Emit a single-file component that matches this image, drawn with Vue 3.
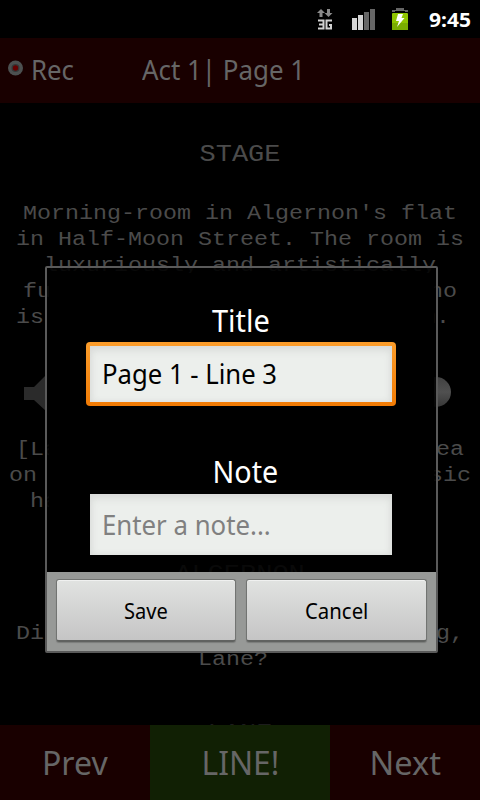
<script setup>
const vFit = {
  mounted(el, { value }) {
    el.style.transform = `scaleX(${value / el.offsetWidth})`
  },
}
const stage = [
  "Morning-room in Algernon's flat",
  'in Half-Moon Street. The room is',
  'luxuriously and artistically',
  'furnished. The sound of a piano',
  'is heard in the adjoining room.\u00a0',
]
const direction = [
  '[Lane is arranging afternoon tea',
  'on the table, and after the music',
  'has ceased, Algernon enters.]\u00a0',
]
const speech = ['Did you hear what I was playing,', 'Lane?\u00a0']
</script>

<template>
  <div class="screen">
    <header class="status">
      <svg class="net" width="18" height="24" viewBox="0 0 18 24">
        <path d="M5 1 9 5H6.500V9H3.500V5H1zM12.500 9 8.500 5H11V1H14V5H16.500z" fill="#8b8b8b" />
        <path d="M2 12.500H7.500V20.500H2M3 16.500H7.500M16 12.500H10.500V20.500H15V17H13" fill="none" stroke="#d2d2d2" stroke-width="2" />
      </svg>
      <svg class="signal" width="24" height="22" viewBox="0 0 24 22">
        <path d="M0 9h5v12H0zM6 6h5v15H6z" fill="#d4d4d4" />
        <path d="M12 3h5v18h-5zM18 0h5v21h-5z" fill="#666" />
      </svg>
      <svg class="battery" width="18" height="24" viewBox="0 0 18 24">
        <path d="M1 5V3H5V1H13V3H17V5H14V4H4V5z" fill="#666" />
        <rect x="1" y="6" width="16" height="17" rx="1" fill="#8fc400" />
        <path d="M1 16h16v7H1z" fill="#7aad00" />
        <path d="M7 7h5L10.500 11H13.500L6 20 8 14H5z" fill="#fff" />
      </svg>
      <b class="clock"><span v-fit="42">9:45</span></b>
    </header>

    <nav class="top">
      <svg width="16" height="16" viewBox="0 0 16 16">
        <circle cx="8.500" cy="8" r="7.500" fill="#4c5050" />
        <circle cx="8.500" cy="8" r="4" fill="#343838" />
        <circle cx="8.500" cy="8" r="2.700" fill="#650000" />
      </svg>
      <span v-fit="43" class="rec">Rec</span>
      <span v-fit="163" class="page">Act 1| Page 1</span>
    </nav>

    <main class="script">
      <h2>STAGE</h2>
      <div class="lines">
        <p v-for="l in stage" :key="l">{{ l }}</p>
      </div>
      <div class="player">
        <svg width="34" height="36" viewBox="0 0 34 36">
          <path d="M0 12H10L22 0V36L10 25H0z" fill="#2b2b2b" />
        </svg>
        <i class="knob"></i>
      </div>
      <div class="lines">
        <p v-for="l in direction" :key="l">{{ l }}</p>
      </div>
      <h2 class="speaker">ALGERNON</h2>
      <div class="lines">
        <p v-for="l in speech" :key="l">{{ l }}</p>
      </div>
      <h2 class="next-speaker">LANE</h2>
    </main>

    <footer class="bottom">
      <div><span v-fit="66">Prev</span></div>
      <div class="cue"><span v-fit="78">LINE!</span></div>
      <div><span v-fit="71">Next</span></div>
    </footer>

    <section class="dialog">
      <div class="form">
        <label class="title"><span v-fit="58">Title</span></label>
        <div class="field focused"><span v-fit="175">Page 1 - Line 3</span></div>
        <label class="note"><span v-fit="66">Note</span></label>
        <div class="field hint"><span v-fit="169">Enter a note...</span></div>
      </div>
      <div class="actions">
        <button><span v-fit="44">Save</span></button>
        <button><span v-fit="63">Cancel</span></button>
      </div>
    </section>
  </div>
</template>

<style>
body {
  background: #000;
}
</style>

<style scoped>
* {
  box-sizing: border-box;
}
.screen {
  position: relative;
  width: 480px;
  height: 800px;
  overflow: hidden;
  display: flex;
  flex-direction: column;
  background: #000;
  font-family: "Noto Sans", "Open Sans", sans-serif;
}
span {
  display: inline-block;
  white-space: nowrap;
}
.status {
  flex: 0 0 38px;
  display: flex;
  align-items: flex-start;
  padding: 8px 0 0 316px;
}
.signal {
  margin: 1px 0 0 18px;
}
.battery {
  margin: -1px 0 0 15px;
}
.clock {
  flex: 1;
  display: flex;
  margin: 2px 0 0 20px;
  color: #fff;
  font-size: 20px;
  line-height: 20px;
}
.clock span,
.top span,
.field span {
  transform-origin: left;
}
.top {
  flex: 0 0 65px;
  display: grid;
  grid-template-columns: 23px 111px 1fr;
  align-items: center;
  justify-items: start;
  padding-left: 7px;
  background: #190000;
  color: #666;
  font-size: 27px;
  line-height: 64px;
}
.top span {
  margin: -1px 0 0 1px;
}
.top svg {
  margin-top: -5px;
}
.script {
  flex: 1;
  min-height: 0;
  overflow: hidden;
  padding-top: 37px;
  font-family: "Liberation Mono", monospace;
  color: #4b4b4b;
  text-align: center;
}
h2 {
  margin: 0;
  font-size: 24.5px;
  font-weight: 400;
  line-height: 30px;
  transform: scaleX(1.102);
}
p {
  margin: 0;
  font-size: 20.5px;
  line-height: 26px;
  white-space: nowrap;
  transform: scaleX(1.138);
}
.script > h2 + .lines {
  margin-top: 31px;
}
.player {
  height: 106px;
  display: flex;
  align-items: center;
  justify-content: space-between;
  padding: 18px 29px 0 24px;
}
.knob {
  width: 30px;
  height: 30px;
  margin-top: -3px;
  border-radius: 50%;
  background: linear-gradient(#414141, #505050 50%, #373737);
}
.speaker {
  margin-top: 45px;
}
.script > .speaker + .lines {
  margin-top: 31px;
}
.next-speaker {
  margin-top: 46px;
  color: #1c1c1c;
}
.bottom {
  flex: 0 0 75px;
  display: grid;
  grid-template-columns: 150px 180px 150px;
  background: #190000;
  color: #666;
  font-size: 33px;
  line-height: 75px;
  text-align: center;
}
.cue {
  background: #112004;
}
.dialog {
  position: absolute;
  left: 45px;
  top: 266px;
  width: 393px;
  height: 387px;
  border: 2px solid #5a5a5a;
  border-radius: 2px;
  display: flex;
  flex-direction: column;
  background: rgba(0, 0, 0, 0.88);
}
.form {
  flex: 1;
  margin: 5px 2px 10px;
  padding: 24px 38px 0 37px;
  display: flex;
  flex-direction: column;
  background: #000;
}
label {
  color: #fff;
  font-size: 30px;
  line-height: 48px;
  text-align: center;
}
.title {
  height: 45px;
}
.note {
  height: 44px;
  margin-top: 44px;
  padding-left: 8px;
  line-height: 44px;
}
.field {
  height: 61px;
  margin: 0 4px;
  padding-left: 12px;
  font-size: 27px;
  line-height: 62px;
  color: #000;
  background: #ecefec;
  box-shadow: inset 0 4px 8px #d8dad8, inset 0 0 6px #dddfdd;
}
.focused {
  height: 64px;
  margin: 0;
  border: 4px solid transparent;
  border-radius: 4px;
  line-height: 56px;
  background: linear-gradient(#ecefec, #ecefec) padding-box, linear-gradient(#fb9d2b, #f17b05) border-box;
}
.hint {
  color: #808080;
}
.actions {
  flex: 0 0 79px;
  display: grid;
  grid-template-columns: 180px 181px;
  gap: 10px;
  padding: 7px 9px 9px;
  background: #979997;
}
button {
  padding: 2px 0 0;
  border: 1px solid #727472;
  border-bottom: 2px solid #606260;
  border-radius: 3px;
  background: linear-gradient(#e1e3e1, #d3d4d3 50%, #c5c5c5);
  box-shadow: inset 0 1px #f0f1f0, 0 1px 1px #7b7d7b;
  color: #000;
  font-family: inherit;
  font-size: 21px;
}
</style>
